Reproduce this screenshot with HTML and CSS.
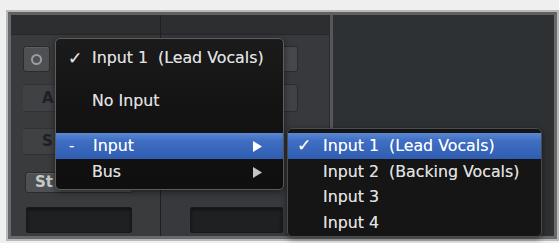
FILE: index.html
```html
<!DOCTYPE html>
<html>
<head>
<meta charset="utf-8">
<link rel="stylesheet" href="styles.css">
</head>
<body>
<div class="page">
  <div class="panel">
    <div class="col col1">
      <div class="hdr"></div>
      <div class="btn btn-o"><span class="ring"></span></div>
      <div class="slot slot-a">A</div>
      <div class="slot slot-s">S</div>
      <div class="btn btn-st">St</div>
      <div class="field f1"></div>
    </div>
    <div class="vdiv"></div>
    <div class="col col2">
      <div class="hdr"></div>
      <div class="btn2 b1"></div>
      <div class="btn2 b2"></div>
      <div class="field f2"></div>
    </div>
    <div class="vdiv2"></div>
    <div class="col col3"></div>
  </div>

  <div class="menu main">
    <div class="item"><span class="mk">✓</span><span class="lbl">Input 1&nbsp;&nbsp;(Lead Vocals)</span></div>
    <div class="sep s1"></div>
    <div class="item"><span class="mk"></span><span class="lbl">No Input</span></div>
    <div class="sep s2"></div>
    <div class="item hl"><span class="mk dash">-</span><span class="lbl">Input</span><svg class="arr" viewBox="0 0 9 11"><polygon points="0,0 9,5.5 0,11"/></svg></div>
    <div class="item"><span class="mk"></span><span class="lbl">Bus</span><svg class="arr" viewBox="0 0 9 11"><polygon points="0,0 9,5.5 0,11"/></svg></div>
  </div>

  <div class="menu sub">
    <div class="item hl"><span class="mk">✓</span><span class="lbl">Input 1&nbsp;&nbsp;(Lead Vocals)</span></div>
    <div class="item"><span class="mk"></span><span class="lbl">Input 2&nbsp;&nbsp;(Backing Vocals)</span></div>
    <div class="item"><span class="mk"></span><span class="lbl">Input 3</span></div>
    <div class="item"><span class="mk"></span><span class="lbl">Input 4</span></div>
  </div>
</div>
</body>
</html>
```

FILE: styles.css
```css
html, body {
  margin: 0;
  padding: 0;
  background: #efefef;
}
body {
  width: 559px;
  height: 243px;
  overflow: hidden;
  font-family: "DejaVu Sans", "Liberation Sans", sans-serif;
}
.page {
  position: relative;
  width: 559px;
  height: 243px;
  padding: 12px 0 0 8px;
  box-sizing: border-box;
}
.panel {
  width: 549px;
  height: 227px;
  box-sizing: border-box;
  border: 3px solid #676a6c;
  border-top-color: #5e6062;
  box-shadow: 0 0 0 2px #b9b9b9;
  display: grid;
  grid-template-columns: 149px 1px 168px 4px 1fr;
  background: #2f3235;
}
.col {
  display: flex;
  flex-direction: column;
  align-items: flex-start;
  overflow: hidden;
}
.col1 {
  background: #393b3d;
}
.col2 {
  background: #37393c;
}
.col3 {
  background: #2e3134;
}
.vdiv {
  background: #1f2022;
}
.vdiv2 {
  background: #55585a;
  border-left: 1px solid #2a2c2e;
}
.hdr {
  align-self: stretch;
  height: 20px;
  flex: none;
  background: #2c2e30;
  border-bottom: 1px solid #242628;
  box-sizing: border-box;
}
.btn {
  box-sizing: border-box;
  background: #4e5053;
  border: 1px solid #2a2b2d;
  border-radius: 3px;
  box-shadow: inset 0 1px 0 #5c5f62;
}
.btn-o {
  margin: 11px 0 0 12px;
  width: 27px;
  height: 26px;
  display: flex;
  align-items: center;
  justify-content: center;
}
.ring {
  width: 7px;
  height: 7px;
  border: 2px solid #9a9c9e;
  border-radius: 50%;
}
.slot {
  box-sizing: border-box;
  background: #3f4144;
  border-top: 1px solid #303234;
  border-bottom: 1px solid #303234;
  color: #1f2021;
  font-size: 15px;
  font-weight: bold;
  padding-left: 19px;
  width: 60px;
}
.slot-a {
  margin: 12px 0 0 12px;
  height: 28px;
  line-height: 26px;
}
.slot-s {
  margin: 16px 0 0 12px;
  height: 27px;
  line-height: 25px;
}
.btn-st {
  margin: 17px 0 0 14px;
  width: 108px;
  height: 21px;
  color: #c6c8ca;
  font-size: 15px;
  font-weight: bold;
  line-height: 19px;
  padding-left: 9px;
}
.field {
  box-sizing: border-box;
  height: 26px;
  background: #1f2021;
  border: 1px solid #18191a;
  border-radius: 2px;
  box-shadow: inset 0 2px 3px #121314;
}
.f1 {
  margin: 14px 0 0 15px;
  width: 106px;
}
.btn2 {
  box-sizing: border-box;
  width: 36px;
  margin-left: 101px;
  background: #46484b;
  border: 1px solid #2a2b2d;
  border-radius: 3px;
}
.b1 {
  margin-top: 11px;
  height: 26px;
}
.b2 {
  margin-top: 12px;
  height: 28px;
  background: #404245;
}
.f2 {
  margin: 95px 0 0 29px;
  width: 93px;
}

/* menus */
.menu {
  position: absolute;
  box-sizing: border-box;
  background: #151515;
  border: 1px solid #5c5d5f;
  border-radius: 5px;
  color: #e0e0e0;
  font-size: 15.8px;
  white-space: nowrap;
  text-shadow: 0 0 0.6px rgba(255, 255, 255, 0.6);
  box-shadow: 0 2px 6px rgba(0, 0, 0, 0.5);
}
.main {
  left: 55px;
  top: 38px;
  width: 229px;
  height: 152px;
  padding-top: 6px;
  background: linear-gradient(#1b1b1b, #141414 40%, #0f0f0f);
}
.sub {
  left: 287px;
  top: 128px;
  width: 255px;
  height: 109px;
  padding-top: 4px;
  border-color: #4a4b4d;
}
.item {
  display: flex;
  align-items: center;
  height: 26px;
  line-height: 26px;
  padding: 0 21px 0 12px;
}
.sub .item {
  height: 25.5px;
  line-height: 25.5px;
  padding-left: 9px;
}
.mk {
  width: 24px;
  flex: none;
  font-size: 17px;
  font-weight: bold;
}
.sub .mk {
  width: 26px;
}
.dash {
  padding-left: 1px;
  font-size: 15px;
  font-weight: normal;
}
.lbl {
  flex: 1;
}
.arr {
  width: 9px;
  height: 11px;
  fill: #c4c4c4;
}
.hl {
  background: linear-gradient(#5b88d3, #3f6ec2 30%, #2f5db2);
  color: #ffffff;
}
.hl .arr {
  fill: #ffffff;
}
.sep.s1 {
  height: 17px;
}
.sep.s2 {
  height: 19px;
}
```
